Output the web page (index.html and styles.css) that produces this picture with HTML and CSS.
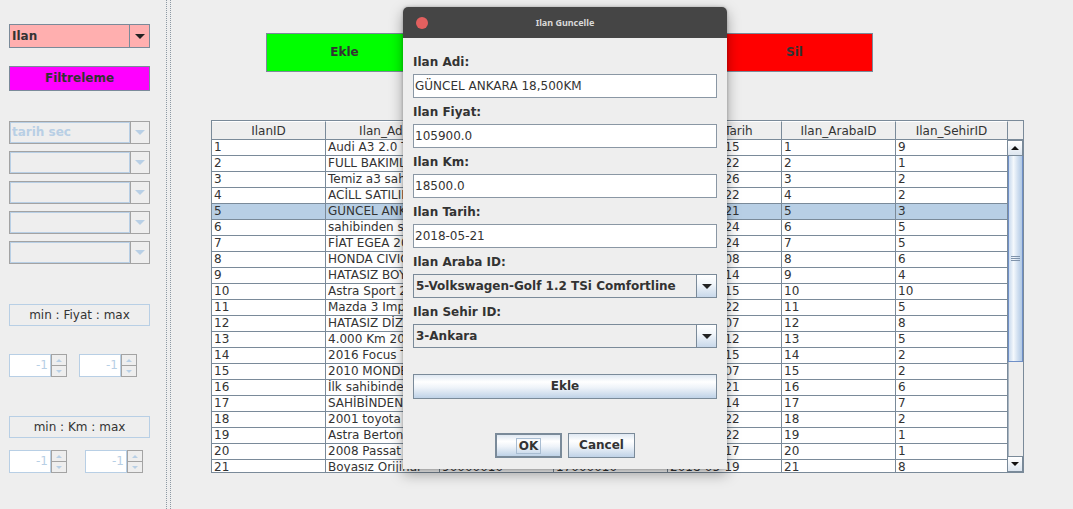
FILE: index.html
```html
<!DOCTYPE html>
<html lang="tr">
<head>
<meta charset="utf-8">
<title>Ilan</title>
<link rel="stylesheet" href="styles.css">
</head>
<body>
<div class="app">
  <aside class="side">
    <div class="combo combo-pink">
      <span class="combo-text">Ilan</span>
      <span class="combo-btn"><i class="tri"></i></span>
    </div>
    <div class="btn-magenta">Filtreleme</div>
    <div class="dcombos">
      <div class="dcombo"><span class="dcombo-text">tarih sec</span><span class="dcombo-btn"><i class="tri tri-light"></i></span></div>
      <div class="dcombo"><span class="dcombo-text"></span><span class="dcombo-btn"><i class="tri tri-light"></i></span></div>
      <div class="dcombo"><span class="dcombo-text"></span><span class="dcombo-btn"><i class="tri tri-light"></i></span></div>
      <div class="dcombo"><span class="dcombo-text"></span><span class="dcombo-btn"><i class="tri tri-light"></i></span></div>
      <div class="dcombo"><span class="dcombo-text"></span><span class="dcombo-btn"><i class="tri tri-light"></i></span></div>
    </div>
    <div class="rangelabel rl-fiyat">min : Fiyat : max</div>
    <div class="spins spins-fiyat">
      <div class="spin"><span class="spin-field">-1</span><span class="spin-btns"><span class="sb"><i class="mini up"></i></span><span class="sb"><i class="mini down"></i></span></span></div>
      <div class="spin"><span class="spin-field">-1</span><span class="spin-btns"><span class="sb"><i class="mini up"></i></span><span class="sb"><i class="mini down"></i></span></span></div>
    </div>
    <div class="rangelabel rl-km">min : Km : max</div>
    <div class="spins spins-km">
      <div class="spin"><span class="spin-field">-1</span><span class="spin-btns"><span class="sb"><i class="mini up"></i></span><span class="sb"><i class="mini down"></i></span></span></div>
      <div class="spin"><span class="spin-field">-1</span><span class="spin-btns"><span class="sb"><i class="mini up"></i></span><span class="sb"><i class="mini down"></i></span></span></div>
    </div>
  </aside>

  <div class="divider"><span class="dots"></span><span class="dots"></span></div>

  <main class="main">
    <div class="actions">
      <div class="abtn green">Ekle</div>
      <div class="abtn yellow">Guncelle</div>
      <div class="abtn red">Sil</div>
    </div>

    <div class="scrollpane">
      <div class="tbl">
        <div class="tr thead">
          <div class="th">IlanID</div><div class="th">Ilan_Adi</div><div class="th">Ilan_Fiyat</div><div class="th">Ilan_Km</div><div class="th">Ilan_Tarih</div><div class="th">Ilan_ArabaID</div><div class="th last">Ilan_SehirID</div>
        </div>
        <div class="tr"><div class="td">1</div><div class="td">Audi A3 2.0 TDI Sportback</div><div class="td">245000.0</div><div class="td">65000.0</div><div class="td">2018-05-15</div><div class="td">1</div><div class="td last">9</div></div>
        <div class="tr"><div class="td">2</div><div class="td">FULL BAKIMLI TEMİZ ARAÇ</div><div class="td">89500.0</div><div class="td">142000.0</div><div class="td">2018-05-22</div><div class="td">2</div><div class="td last">1</div></div>
        <div class="tr"><div class="td">3</div><div class="td">Temiz a3 sahibinden</div><div class="td">198000.0</div><div class="td">87000.0</div><div class="td">2018-05-26</div><div class="td">3</div><div class="td last">2</div></div>
        <div class="tr"><div class="td">4</div><div class="td">ACİLL SATILIK</div><div class="td">67500.0</div><div class="td">210000.0</div><div class="td">2018-05-22</div><div class="td">4</div><div class="td last">2</div></div>
        <div class="tr sel"><div class="td">5</div><div class="td">GÜNCEL ANKARA 18,500KM</div><div class="td">105900.0</div><div class="td">18500.0</div><div class="td">2018-05-21</div><div class="td">5</div><div class="td last">3</div></div>
        <div class="tr"><div class="td">6</div><div class="td">sahibinden satılık</div><div class="td">54000.0</div><div class="td">176000.0</div><div class="td">2018-05-24</div><div class="td">6</div><div class="td last">5</div></div>
        <div class="tr"><div class="td">7</div><div class="td">FİAT EGEA 2017</div><div class="td">72500.0</div><div class="td">35000.0</div><div class="td">2018-05-24</div><div class="td">7</div><div class="td last">5</div></div>
        <div class="tr"><div class="td">8</div><div class="td">HONDA CIVIC 1.6</div><div class="td">118000.0</div><div class="td">64000.0</div><div class="td">2018-05-08</div><div class="td">8</div><div class="td last">6</div></div>
        <div class="tr"><div class="td">9</div><div class="td">HATASIZ BOYASIZ</div><div class="td">96000.0</div><div class="td">92000.0</div><div class="td">2018-05-14</div><div class="td">9</div><div class="td last">4</div></div>
        <div class="tr"><div class="td">10</div><div class="td">Astra Sport 2015</div><div class="td">83000.0</div><div class="td">110000.0</div><div class="td">2018-05-15</div><div class="td">10</div><div class="td last">10</div></div>
        <div class="tr"><div class="td">11</div><div class="td">Mazda 3 Impression</div><div class="td">61000.0</div><div class="td">158000.0</div><div class="td">2018-05-22</div><div class="td">11</div><div class="td last">5</div></div>
        <div class="tr"><div class="td">12</div><div class="td">HATASIZ DİZEL</div><div class="td">77000.0</div><div class="td">123000.0</div><div class="td">2018-05-07</div><div class="td">12</div><div class="td last">8</div></div>
        <div class="tr"><div class="td">13</div><div class="td">4.000 Km 2018</div><div class="td">134000.0</div><div class="td">4000.0</div><div class="td">2018-05-12</div><div class="td">13</div><div class="td last">5</div></div>
        <div class="tr"><div class="td">14</div><div class="td">2016 Focus Titanium</div><div class="td">99000.0</div><div class="td">56000.0</div><div class="td">2018-05-15</div><div class="td">14</div><div class="td last">2</div></div>
        <div class="tr"><div class="td">15</div><div class="td">2010 MONDEO</div><div class="td">58000.0</div><div class="td">189000.0</div><div class="td">2018-05-07</div><div class="td">15</div><div class="td last">2</div></div>
        <div class="tr"><div class="td">16</div><div class="td">İlk sahibinden</div><div class="td">87500.0</div><div class="td">74000.0</div><div class="td">2018-05-21</div><div class="td">16</div><div class="td last">6</div></div>
        <div class="tr"><div class="td">17</div><div class="td">SAHİBİNDEN TEMİZ</div><div class="td">69000.0</div><div class="td">131000.0</div><div class="td">2018-05-14</div><div class="td">17</div><div class="td last">7</div></div>
        <div class="tr"><div class="td">18</div><div class="td">2001 toyota corolla</div><div class="td">32000.0</div><div class="td">265000.0</div><div class="td">2018-05-22</div><div class="td">18</div><div class="td last">2</div></div>
        <div class="tr"><div class="td">19</div><div class="td">Astra Bertone</div><div class="td">41000.0</div><div class="td">198000.0</div><div class="td">2018-05-22</div><div class="td">19</div><div class="td last">1</div></div>
        <div class="tr"><div class="td">20</div><div class="td">2008 Passat</div><div class="td">63000.0</div><div class="td">215000.0</div><div class="td">2018-05-17</div><div class="td">20</div><div class="td last">1</div></div>
        <div class="tr"><div class="td">21</div><div class="td">Boyasız Orijinal</div><div class="td">90000010</div><div class="td">17000010</div><div class="td">2018-05-19</div><div class="td">21</div><div class="td last">8</div></div>
      </div>
      <div class="vscroll">
        <div class="corner"></div>
        <div class="sbtn"><i class="arrow-up"></i></div>
        <div class="thumb"><span class="grip"></span></div>
        <div class="track"></div>
        <div class="sbtn"><i class="arrow-down"></i></div>
      </div>
    </div>
  </main>
</div>

<div class="dialog">
  <div class="titlebar">
    <span class="tb-left"><span class="close"></span></span>
    <span class="tb-title">Ilan Guncelle</span>
    <span class="tb-right"></span>
  </div>
  <div class="dbody">
    <div class="dlabel">Ilan Adi:</div>
    <div class="field">GÜNCEL ANKARA 18,500KM</div>
    <div class="dlabel">Ilan Fiyat:</div>
    <div class="field">105900.0</div>
    <div class="dlabel">Ilan Km:</div>
    <div class="field">18500.0</div>
    <div class="dlabel">Ilan Tarih:</div>
    <div class="field">2018-05-21</div>
    <div class="dlabel">Ilan Araba ID:</div>
    <div class="dcb"><span class="dcb-text">5-Volkswagen-Golf 1.2 TSi Comfortline</span><span class="dcb-btn"><i class="tri"></i></span></div>
    <div class="dlabel">Ilan Sehir ID:</div>
    <div class="dcb"><span class="dcb-text">3-Ankara</span><span class="dcb-btn"><i class="tri"></i></span></div>
    <div class="mbtn wide">Ekle</div>
    <div class="okrow">
      <div class="mbtn ok"><span class="focus">OK</span></div>
      <div class="mbtn cancel">Cancel</div>
    </div>
  </div>
</div>
</body>
</html>
```

FILE: styles.css
```css
* { box-sizing: border-box; }

html, body { margin: 0; padding: 0; }

body {
  width: 1073px;
  height: 509px;
  overflow: hidden;
  position: relative;
  background: #eeeeee;
  font-family: "DejaVu Sans", "Liberation Sans", sans-serif;
  font-size: 12px;
  color: #333333;
}

.app { display: flex; height: 509px; }

/* ---------- left panel ---------- */
.side {
  width: 163px;
  flex: none;
  padding-left: 9px;
  display: flex;
  flex-direction: column;
  align-items: flex-start;
}

.combo {
  width: 141px;
  height: 24px;
  display: flex;
  border: 1px solid #7a8a99;
}
.combo-pink { margin-top: 24px; background: #ffafaf; }
.combo-text { flex: 1; font-weight: bold; padding-left: 2px; line-height: 22px; }
.combo-btn {
  width: 20px;
  border-left: 1px solid #7a8a99;
  display: flex;
  align-items: center;
  justify-content: center;
}

.tri {
  display: block;
  width: 0; height: 0;
  border-left: 5px solid transparent;
  border-right: 5px solid transparent;
  border-top: 5px solid #222222;
}
.tri-light { border-top-color: #b8cfe5; }

.btn-magenta {
  margin-top: 18px;
  width: 141px;
  height: 25px;
  background: #ff00ff;
  border: 1px solid #7a8a99;
  font-weight: bold;
  text-align: center;
  line-height: 23px;
}

.dcombos { margin-top: 30px; display: flex; flex-direction: column; gap: 7px; }
.dcombo {
  width: 141px;
  height: 23px;
  display: flex;
  border: 1px solid #a3a3a3;
}
.dcombo-text {
  flex: 1;
  border: 1px solid #b8cfe5;
  color: #b8cfe5;
  font-weight: bold;
  padding-left: 1px;
  line-height: 19px;
}
.dcombo-btn {
  width: 19px;
  border-left: 1px solid #a3a3a3;
  display: flex;
  align-items: center;
  justify-content: center;
}

.rangelabel {
  width: 141px;
  height: 22px;
  border: 1px solid #b8cfe5;
  text-align: center;
  line-height: 20px;
}
.rl-fiyat { margin-top: 40px; }
.rl-km { margin-top: 39px; }

.spins { display: flex; }
.spins-fiyat { margin-top: 28px; gap: 12px; }
.spins-km { margin-top: 12px; gap: 18px; }

.spin { width: 58px; height: 23px; display: flex; }
.spin-field {
  flex: 1;
  background: #ffffff;
  border: 1px solid #b8cfe5;
  color: #b8cfe5;
  text-align: right;
  padding-right: 2px;
  line-height: 21px;
}
.spin-btns {
  width: 16px;
  border: 1px solid #a3a3a3;
  display: flex;
  flex-direction: column;
}
.sb { flex: 1; display: flex; align-items: center; justify-content: center; }
.sb + .sb { border-top: 1px solid #a3a3a3; }
.mini { display: block; width: 0; height: 0; border-left: 3px solid transparent; border-right: 3px solid transparent; }
.mini.up { border-bottom: 3px solid #b8cfe5; }
.mini.down { border-top: 3px solid #b8cfe5; }

/* ---------- split divider ---------- */
.divider {
  width: 10px;
  flex: none;
  display: flex;
  gap: 3px;
  padding-left: 3px;
}
.dots { width: 1px; border-left: 1px dotted #8d99a4; }

/* ---------- main area ---------- */
.main { flex: 1; padding-top: 33px; }

.actions { margin-left: 93px; display: flex; gap: 68px; }
.abtn {
  width: 157px;
  height: 39px;
  border: 1px solid #7a8a99;
  font-weight: bold;
  text-align: center;
  line-height: 37px;
}
.green { background: #00ff00; }
.yellow { background: #ffff00; }
.red { background: #ff0000; }

.scrollpane {
  margin-top: 48px;
  margin-left: 38px;
  width: 813px;
  height: 353px;
  border: 1px solid #7a8a99;
  display: flex;
  overflow: hidden;
  background: #eeeeee;
}

.tbl { width: 796px; flex: none; background: #ffffff; }
.tr { display: flex; height: 16px; }
.td, .th {
  width: 114px;
  flex: none;
  border-right: 1px solid #7a8a99;
  border-bottom: 1px solid #7a8a99;
  white-space: nowrap;
  overflow: hidden;
}
.td { padding-left: 2px; line-height: 15px; }
.td.last, .th.last { width: 112px; }
.sel { background: #b8cfe5; }

.thead { height: 19px; background: #eeeeee; }
.th {
  text-align: center;
  line-height: 18px;
  padding-top: 1px;
  border-top: 1px solid #ffffff;
  line-height: 16px;
}

.vscroll { width: 15px; flex: none; display: flex; flex-direction: column; }
.corner { height: 19px; background: #eeeeee; border-bottom: 1px solid #7a8a99; }
.sbtn {
  height: 16px;
  border: 1px solid #7a8a99;
  border-left: none;
  background: linear-gradient(#ffffff, #dde6f0);
  display: flex;
  align-items: center;
  justify-content: center;
}
.arrow-up, .arrow-down {
  display: block;
  width: 0; height: 0;
  border-left: 4px solid transparent;
  border-right: 4px solid transparent;
}
.arrow-up { border-bottom: 4px solid #111111; }
.arrow-down { border-top: 4px solid #111111; }
.thumb {
  height: 206px;
  border: 1px solid #6f8fc7;
  border-top: none;
  background: linear-gradient(to right, #c9daee, #f4f8fc 35%, #d3e1f1 65%, #b0c8e4);
  display: flex;
  align-items: center;
  justify-content: center;
}
.grip {
  width: 9px;
  height: 5px;
  border-top: 1px solid #7f93ab;
  border-bottom: 1px solid #7f93ab;
  background: linear-gradient(transparent 1px, #7f93ab 1px, #7f93ab 2px, transparent 2px);
}
.track { flex: 1; background: #eeeeee; border-left: 1px solid #a9b6c3; }

/* ---------- dialog ---------- */
.dialog {
  position: absolute;
  left: 403px;
  top: 7px;
  width: 324px;
  height: 462px;
  background: #eeeeee;
  border-radius: 5px 5px 0 0;
  box-shadow: 0 5px 14px rgba(0, 0, 0, 0.35), 0 0 3px rgba(0, 0, 0, 0.25);
  overflow: hidden;
}

.titlebar {
  height: 31px;
  background: #454545;
  display: grid;
  grid-template-columns: 1fr auto 1fr;
  align-items: center;
}
.tb-left { display: flex; padding-left: 13px; }
.close {
  width: 12px;
  height: 12px;
  border-radius: 50%;
  background: #e2605f;
}
.tb-title {
  font-family: "Noto Sans", "DejaVu Sans", sans-serif;
  font-size: 9px;
  font-weight: bold;
  color: #d8d8d8;
}

.dbody { padding: 10px 10px 0 10px; display: flex; flex-direction: column; }

.dlabel {
  height: 26px;
  padding-top: 7px;
  line-height: 14px;
  font-weight: bold;
}

.field {
  height: 24px;
  background: #ffffff;
  border: 1px solid #8a97a4;
  padding-left: 1px;
  line-height: 23px;
  white-space: nowrap;
}

.dcb {
  height: 24px;
  display: flex;
  border: 1px solid #7a8a99;
  background: #eeeeee;
}
.dcb-text { flex: 1; font-weight: bold; padding-left: 2px; line-height: 22px; }
.dcb-btn {
  width: 20px;
  border-left: 1px solid #7a8a99;
  background: linear-gradient(#ffffff, #f2f6fa 40%, #c8d8ea);
  display: flex;
  align-items: center;
  justify-content: center;
}

.mbtn {
  height: 25px;
  border: 1px solid #7a8a99;
  background: linear-gradient(#dfe8f2 0%, #ffffff 30%, #eef3f9 55%, #bfd2e7 100%);
  font-weight: bold;
  text-align: center;
  line-height: 23px;
}
.wide { margin-top: 26px; }

.okrow { margin-top: 34px; display: flex; justify-content: center; gap: 6px; }
.ok, .cancel { width: 67px; }
.ok {
  border: 2px solid #7a8a99;
  display: flex;
  align-items: center;
  justify-content: center;
}
.focus {
  border: 1px solid #a9bdd2;
  padding: 0 2px;
  line-height: 14px;
}
```
